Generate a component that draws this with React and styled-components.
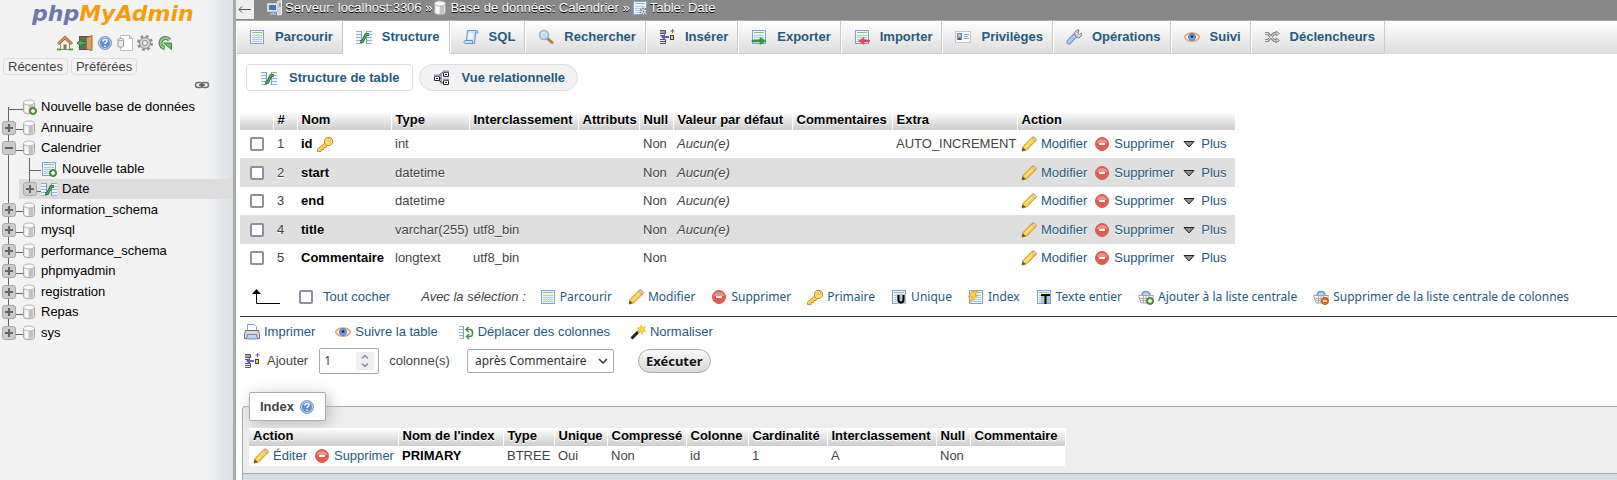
import React from "react";
import styled, { createGlobalStyle, css } from "styled-components";

const LINK = "#235a81";
const UI_FONT = `"Noto Sans", "Open Sans", sans-serif`;
const HEAD_GRADIENT = "linear-gradient(#ffffff, #cccccc)";

const GlobalStyle = createGlobalStyle`
  *, *::before, *::after { box-sizing: border-box; }
  body {
    margin: 0;
    background: #fff;
    color: #444;
    font: 13px/18px "Liberation Sans", Arial, sans-serif;
    overflow: hidden;
  }
  a { color: ${LINK}; text-decoration: none; }
  button, input, select { font: inherit; margin: 0; }
`;

/* ---------- icons ---------- */

const grid = (
  <>
    <rect x="1.5" y="1.5" width="13" height="13" fill="#f2f7fd" stroke="#7ba3d6" />
    <path d="M3 3.5h10" stroke="#8fc46f" />
    <path d="M3 6.500h10M3 8.500h10M3 10.500h10M3 12.500h10" stroke="#a9c6ea" />
    <path d="M5.500 5v8M9.500 5v8" stroke="#c9dcf2" />
  </>
);

const cylinder = (
  <>
    <path d="M2.500 3.500v9c0 1.400 2.400 2.200 5.500 2.200s5.500-.8 5.500-2.200v-9z" fill="#e2e2e2" stroke="#a6a6a6" />
    <path d="M8 6h4v7l-4 1z" fill="#c2c2c2" />
    <path d="M4 6h3v8l-3-1z" fill="#f7f7f7" />
    <ellipse cx="8" cy="3.500" rx="5.500" ry="2.500" fill="#fafafa" stroke="#b6b6b6" />
  </>
);

const plusBadge = (
  <>
    <circle cx="12" cy="12" r="3.500" fill="#5da03c" stroke="#3f7f26" />
    <path d="M12 10v4M10 12h4" stroke="#fff" strokeWidth="1.500" />
  </>
);

const basket = (
  <>
    <path d="M4 7c0-6 8-6 8 0" fill="#b9d4ee" stroke="#6d9cc4" strokeWidth="1.500" />
    <path d="M.5 6.500h15l-2 7.500H3z" fill="#f6f6f6" stroke="#a4a4a4" />
    <path d="M2 9.500h12M3 11.500h10M5.500 7v7M8 7v7M10.500 7v7" stroke="#b0b0b0" />
  </>
);

const ICONS = {
  home: (
    <>
      <path d="M3.500 8v6.500h9V8L8 4z" fill="#f6f1e4" stroke="#8e8a7c" />
      <path d="M1 9L8 2.500 15 9" fill="none" stroke="#a8642a" strokeWidth="3" />
      <path d="M1 9L8 2.500 15 9" fill="none" stroke="#dd9c55" strokeWidth="1.500" />
      <rect x="6.500" y="9.500" width="3" height="5" fill="#8b7355" />
      <path d="M0 14.500h4M12 14.500h4" stroke="#57a63b" strokeWidth="2" />
    </>
  ),
  exit: (
    <>
      <rect x="2.500" y="1.500" width="12" height="13" fill="#6f6a60" stroke="#5c5040" />
      <path d="M9.500 3l5.500-2.500v15l-5.500-1.500z" fill="#dba263" stroke="#a56a35" />
      <path d="M0 8l4.500-4v2.500H9v3H4.500V12z" fill="#4fae5b" stroke="#2c7c3a" />
    </>
  ),
  help: (
    <>
      <circle cx="8" cy="8" r="6.500" fill="#5b8fd0" stroke="#7d9cc9" />
      <circle cx="8" cy="8" r="5.500" fill="none" stroke="#c4daf3" />
      <path d="M6 6.500c0-3 4-2.500 4-.5 0 1.500-2 1.500-2 3M8 10.500v1.500" fill="none" stroke="#fff" strokeWidth="1.500" />
    </>
  ),
  docs: (
    <>
      <path d="M3.500.5h9l3 3v12h-12z" fill="#fff" stroke="#bdbdbd" />
      <path d="M12.500.5v3h3" fill="none" stroke="#b5b5b5" />
      <path d="M1 4.500v7c1 1 4.500 1 5.500 0v-7z" fill="#ececec" stroke="#9a9a9a" />
      <ellipse cx="3.750" cy="4.500" rx="2.750" ry="1" fill="#fff" stroke="#9a9a9a" />
    </>
  ),
  gear: (
    <>
      <circle cx="8" cy="8" r="6.500" fill="none" stroke="#8f8f8f" strokeWidth="3" strokeDasharray="2.600 2.500" />
      <circle cx="8" cy="8" r="5.500" fill="#d2d2d2" stroke="#8f8f8f" />
      <circle cx="8" cy="8" r="2.500" fill="#f3f3f3" stroke="#8f8f8f" />
    </>
  ),
  reload: (
    <>
      <path d="M12.500 5A5 5 0 1 0 8 13" fill="none" stroke="#3c8a44" strokeWidth="4" />
      <path d="M12.500 5A5 5 0 1 0 8 13" fill="none" stroke="#8fcb8b" strokeWidth="2" />
      <path d="M6.500 8h8v6.500z" fill="#6fba70" stroke="#3c8a44" />
    </>
  ),
  link: (
    <>
      <rect x="1.500" y="5.500" width="7" height="5" rx="2.500" fill="none" stroke="#6f6f6f" strokeWidth="1.500" />
      <rect x="7.500" y="5.500" width="7" height="5" rx="2.500" fill="none" stroke="#6f6f6f" strokeWidth="1.500" />
      <path d="M5 8h6" stroke="#4c4c4c" strokeWidth="1.500" />
    </>
  ),
  db: cylinder,
  dbNew: <>{cylinder}{plusBadge}</>,
  table: grid,
  tableNew: <>{grid}{plusBadge}</>,
  tableGear: (
    <>
      {grid}
      <circle cx="11.500" cy="11.500" r="3" fill="#e9e9e9" stroke="#858585" strokeWidth="2" strokeDasharray="1.500 1" />
      <circle cx="11.500" cy="11.500" r="1" fill="#858585" />
    </>
  ),
  structure: (
    <>
      <rect x="0" y="2" width="5" height="13" fill="#eef5fd" />
      <rect x="11" y="2" width="5" height="13" fill="#eef5fd" />
      <path d="M5.500 2v13M10.500 2v13" stroke="#6e9fdb" />
      <path d="M0 2.500h5M11 2.500h5" stroke="#8fc46f" />
      <path d="M0 5.500h5M0 8.500h5M0 11.500h5M0 14.500h5M11 5.500h5M11 8.500h5M11 11.500h5M11 14.500h5" stroke="#8fb5e4" />
      <path d="M4 12.500h2.500L10 5.500h3" fill="none" stroke="#2f7a33" strokeWidth="3" strokeLinejoin="round" />
      <path d="M4 12.500h2.500L10 5.500h3" fill="none" stroke="#5cb85c" />
    </>
  ),
  server: (
    <>
      <path d="M10.500 1.500l4-1v14l-4 .5z" fill="#d2d2d2" stroke="#efefef" />
      <path d="M12 4h2M12 6h2" stroke="#7c7c7c" />
      <rect x=".5" y="3.500" width="10" height="8" fill="#e6e6e6" stroke="#cfcfcf" />
      <rect x="2" y="5" width="7" height="5" fill="#3e76bd" />
      <path d="M3 14h6M6 11v3" stroke="#9db8d8" strokeWidth="2" />
    </>
  ),
  sql: (
    <>
      <path d="M4.500 1.500h9c2 0 2 3 0 3h-1l-1 10h-9c-2 0-2-3 0-3h1z" fill="#cfe3f9" stroke="#5f93d0" />
      <path d="M12.500 4.500v-2M2.500 11.500h7v3" fill="none" stroke="#5f93d0" />
      <path d="M5.500 4h5L9.500 10H5z" fill="#eef6ff" />
    </>
  ),
  search: (
    <>
      <path d="M9.500 9.500l4.500 4" stroke="#b27c45" strokeWidth="3" strokeLinecap="round" />
      <circle cx="6" cy="6" r="4.500" fill="#c3dffa" stroke="#93b3d8" strokeWidth="1.500" />
      <path d="M4 5c.5-1 1.500-1.500 2.500-1.500" fill="none" stroke="#fff" />
    </>
  ),
  insert: (
    <>
      <path d="M1 1.500h5.500v3H1M1 10.500h5.500v4H1M1 12.500h5M1 3h5M1 6.500h3" fill="none" stroke="#555" />
      <path d="M2 8l4-3.500V7h4v2H6v2.500z" fill="#5d5dcc" />
      <rect x="11.500" y="6.500" width="3" height="4" fill="#ffcf2e" stroke="#444" />
      <path d="M13.500 0v4M11.500 2h4" stroke="#5d5dcc" />
    </>
  ),
  export: (
    <>
      {grid}
      <path d="M1 11h8V8.500l6 3.500-6 3.500V13H1z" fill="#3f9a3c" stroke="#2c7a2b" strokeWidth=".5" />
    </>
  ),
  import: (
    <>
      {grid}
      <path d="M15.500 11H10V8.500L4.500 12l5.500 3.500V13h5.500z" fill="#ee4b54" stroke="#d6303a" strokeWidth=".5" />
    </>
  ),
  privileges: (
    <>
      <rect x=".5" y="2.500" width="15" height="11" fill="#fdfdfd" stroke="#c5c5c5" />
      <rect x="2" y="4" width="5" height="7" fill="#4d94dc" />
      <circle cx="4.500" cy="6.500" r="1.500" fill="#f0c79a" />
      <path d="M3 11c0-3 3-3 3 0z" fill="#8a4f2d" />
      <path d="M9 5.500h5M9 7.500h4M9 9.500h5" stroke="#79a7db" />
    </>
  ),
  wrench: (
    <>
      <path d="M8.500 8L8 4.500l3-3.500 2 0-1 3 1.500 1.500 2-1.500.5 2-3 3z" fill="#d5d5d5" stroke="#808080" />
      <path d="M3 13L8 7.500" stroke="#6f8fd0" strokeWidth="5" strokeLinecap="round" />
      <path d="M3 13L8 7.500" stroke="#b4c8f2" strokeWidth="3" strokeLinecap="round" />
    </>
  ),
  eye: (
    <>
      <path d="M.5 8C3 2.500 13 2.500 15.500 8 13 13.500 3 13.500.5 8z" fill="#f8efe8" stroke="#d9a57f" strokeWidth="1.500" />
      <circle cx="8" cy="8" r="3.500" fill="#7ba4e6" stroke="#5478bb" />
      <circle cx="8" cy="7.500" r="1.500" fill="#1e2b52" />
    </>
  ),
  shuffle: (
    <>
      <path d="M1 4.500h3l6 7h3M1 11.500h3l6-7h3" fill="none" stroke="#8b8b8b" strokeWidth="3" />
      <path d="M1 4.500h3l6 7h3M1 11.500h3l6-7h3" fill="none" stroke="#e4e4e4" />
      <path d="M12 2l3.500 2.500L12 7zM12 9l3.500 2.500L12 14z" fill="#ddd" stroke="#8b8b8b" />
    </>
  ),
  relation: (
    <>
      <path d="M4 6l5-4M4 10l5 3M5 8.500h2v5M7 4v5" stroke="#555" fill="none" />
      <path d="M9.500 2.500h5v4h-5zM9.500 10.500h5v4h-5zM.5 6.500h5v4h-5z" fill="#fff" stroke="#222" />
      <path d="M9 1.500h6M9 9.500h6M0 5.500h6" stroke="#9a93dd" strokeWidth="2" />
      <path d="M11 4.500h2M11 12.500h2M2 8.500h2" stroke="#222" />
    </>
  ),
  key: (
    <>
      <path d="M8 7L.5 13v2.500h3.500l.5-2h2l.5-2h2l1-1.500" fill="#f9d455" stroke="#c98f24" />
      <path d="M9.500 1.500h4l2 2v3.500l-2.500 2.500h-3.500l-2-2.500V4z" fill="#fbdc6a" stroke="#c98f24" />
      <circle cx="12.300" cy="4" r="1.300" fill="#fff" stroke="#c98f24" strokeWidth=".7" />
    </>
  ),
  pencil: (
    <>
      <path d="M1 15l1-4.500L11 1.500c1.500-1.500 5 1.500 3.500 3.500L5.500 14z" fill="#f8d24e" stroke="#c18a2b" />
      <path d="M10.500 2l4 3.500 .8-2.500-2.300-2z" fill="#f6cdb0" stroke="#c98b5d" strokeWidth=".7" />
      <path d="M4 11.500L12 3.500" stroke="#fff0a4" />
      <path d="M1 15l.8-3.500L4.500 14z" fill="#5d4527" />
    </>
  ),
  drop: (
    <>
      <circle cx="8" cy="8" r="6.500" fill="#e85a4f" stroke="#d2605a" />
      <path d="M3 7c.5-5.500 9.500-5.500 10 0z" fill="#f39186" />
      <rect x="5" y="7" width="6" height="2" fill="#fff" />
    </>
  ),
  more: <path d="M3 5.500h10L8 11z" fill="#909090" stroke="#222" />,
  unique: (
    <>
      {grid}
      <rect x="6" y="5" width="9" height="10" fill="#b4c2d4" />
      <path d="M7.500 6v4.500c0 4 5 4 5 0V6" fill="none" stroke="#000" strokeWidth="2" />
    </>
  ),
  index: (
    <>
      {grid}
      <path d="M4 2h6L7 6h3l-9 8 3-6H0z" fill="#fccb45" stroke="#dd9b27" strokeWidth=".7" />
    </>
  ),
  fulltext: (
    <>
      {grid}
      <rect x="5" y="5" width="9" height="9" fill="#b4c2d4" />
      <path d="M5 6h9M9.500 6v9" stroke="#000" strokeWidth="2" />
    </>
  ),
  basketAdd: <>{basket}{plusBadge}</>,
  basketRemove: (
    <>
      {basket}
      <circle cx="12" cy="12" r="3.500" fill="#ee6a1d" stroke="#c14d0c" />
      <path d="M10 12h4" stroke="#fff" strokeWidth="1.500" />
    </>
  ),
  print: (
    <>
      <path d="M3.500 7V.5h7l2 2V7z" fill="#fff" stroke="#85a5cc" />
      <path d="M1.500 6.500h13l1 4v4H.5v-4z" fill="#d8d8d8" stroke="#707070" />
      <path d="M3.500 10.500h9l1 4.500h-11z" fill="#b8d4f2" stroke="#6d8db5" />
    </>
  ),
  moveCols: (
    <>
      <path d="M1 2.500h5" stroke="#8fc46f" />
      <path d="M5.500 2v13" stroke="#6e9fdb" />
      <path d="M1 5.500h5M1 8.500h5M1 11.500h5M1 14.500h5" stroke="#8db3e0" />
      <path d="M8 5.500h4c3.500 0 3.500 7 0 7H9" fill="none" stroke="#46934a" strokeWidth="1.500" />
      <path d="M10.500 3L8 5.500 10.500 8M11 10l-2.500 2.500L11 15" fill="none" stroke="#46934a" strokeWidth="1.500" />
    </>
  ),
  wand: (
    <>
      <path d="M1.500 14.500L9 7" stroke="#222" strokeWidth="3" />
      <path d="M8 8l2-2" stroke="#ccc" strokeWidth="3" />
      <path d="M11.500.5l1 3 3-1-1.500 2.500 2 2.500-3 0-.5 3-2-2.500-2.500 1 1-3-2-2 3-.5z" fill="#fbd33c" stroke="#e4a72a" strokeWidth=".5" />
    </>
  ),
};

const IconSvg = styled.svg`
  flex: none;
  display: block;
`;

const Icon = ({ name }) => {
  const narrow = name === "db" || name === "dbNew";
  return (
    <IconSvg
      width={narrow ? 14 : 16}
      height="16"
      viewBox={narrow ? "2 0 14 16" : "0 0 16 16"}
      aria-hidden="true"
    >
      {ICONS[name]}
    </IconSvg>
  );
};

/* ---------- shell ---------- */

const Page = styled.div`
  display: flex;
  height: 100vh;
`;

const Sidebar = styled.aside`
  flex: none;
  width: 236px;
  border-right: 3px solid #aaa;
  background: linear-gradient(to right, #f3f3f3 88%, #dce1e6);
  overflow: hidden;
`;

const Main = styled.main`
  flex: 1;
  min-width: 0;
  overflow: hidden;
`;

/* ---------- sidebar ---------- */

const Logo = styled.a`
  display: block;
  padding-left: 32px;
  height: 33px;
  font: italic bold 22px/28px "DejaVu Sans", sans-serif;
  color: #f89c0e;
  span { color: #6c78af; }
`;

const QuickLinks = styled.nav`
  display: flex;
  gap: 4px;
  padding: 2px 0 0 57px;
`;

const Shortcuts = styled.div`
  display: flex;
  gap: 3px;
  padding: 7px 3px 0;
`;

const ShortcutButton = styled.button`
  height: 17px;
  padding: 0 4px;
  border: 1px solid #ddd;
  border-radius: 4px;
  background: #f3f3f3;
  color: #444;
  line-height: 14px;
`;

const LinkToggle = styled.button`
  display: block;
  margin: 2px 23px 0 auto;
  padding: 0;
  border: 0;
  background: none;
`;

const Tree = styled.ul`
  list-style: none;
  margin: 0;
  padding: 4px 0 0;
`;

const TreeRow = styled.li`
  display: flex;
  align-items: center;
  height: 20px;
  padding-left: 2px;
  &:nth-child(even) { height: 21px; }
  a { color: #000; margin-left: 4px; }
`;

const TrunkCell = styled.span`
  flex: none;
  display: flex;
  align-items: center;
  align-self: stretch;
  width: 21px;
  background:
    linear-gradient(#666, #666) 6px ${(p) => (p.$start ? "10px" : "0")} / 1px ${(p) => (p.$end ? "50%" : "100%")} no-repeat
    ${(p) => p.$branch && `, linear-gradient(#666, #666) 6px 12px / 15px 1px no-repeat`};
`;

const ChildArea = styled.span`
  display: flex;
  align-items: center;
  align-self: stretch;
  flex: 1;
  margin-left: -4px;
  background: ${(p) => (p.$active ? "#ddd" : "none")};
  a { margin-left: 5px; }
`;

const ChildTrunk = styled(TrunkCell)`
  width: 22px;
  padding-left: 4px;
  background:
    linear-gradient(#666, #666) 10px 0 / 1px ${(p) => (p.$end ? "50%" : "100%")} no-repeat,
    linear-gradient(#666, #666) 10px 12px / 12px 1px no-repeat;
`;

const Expander = styled.button`
  display: block;
  width: 14px;
  height: 14px;
  padding: 0;
  border: 1px solid #aaa;
  border-radius: 3px;
  background: #ccc;
  svg { display: block; }
`;

const Toggle = ({ open, label }) => (
  <Expander aria-label={label} aria-expanded={!!open}>
    <svg width="12" height="12" viewBox="0 0 12 12">
      <path d={open ? "M2 6h8" : "M2 6h8M6 2v8"} stroke="#666" strokeWidth="2" />
    </svg>
  </Expander>
);

const DbRow = ({ name, open, end }) => (
  <TreeRow>
    <TrunkCell $branch $end={end}><Toggle open={open} label={name} /></TrunkCell>
    <Icon name="db" />
    <a href="#db">{name}</a>
  </TreeRow>
);

/* ---------- breadcrumb and tabs ---------- */

const Breadcrumb = styled.nav`
  display: flex;
  align-items: flex-start;
  height: 20px;
  background: #888;
  color: #fff;
  text-shadow: 0 1px 0 #000;
  a { color: inherit; line-height: 16px; }
`;

const BackButton = styled.button`
  width: 18px;
  height: 19px;
  margin-right: 13px;
  padding: 0;
  border: 0;
  background: #eee;
  svg { display: block; }
`;

const Crumb = styled.span`
  display: flex;
  gap: 2px;
  line-height: 16px;
`;

const Tabs = styled.nav`
  display: flex;
  height: 34px;
  border-top: 1px solid #aaa;
  background: linear-gradient(#ffffff, #dcdcdc);
`;

const Tab = styled.a`
  display: flex;
  align-items: center;
  gap: 10px;
  padding: 0 9px 0 12px;
  border-left: 1px solid #fff;
  border-right: 1px solid #ccc;
  border-bottom: 1px solid #ccc;
  font-weight: bold;
  ${(p) => p.$active && css`
    background: #fff;
    border-left-color: #fff;
    border-bottom-color: #fff;
  `}
`;

const SubTabs = styled.nav`
  display: flex;
  gap: 6px;
  padding: 10px 10px 0;
`;

const SubTab = styled.a`
  display: flex;
  align-items: center;
  gap: 12px;
  height: 27px;
  padding: 0 12px 0 14px;
  border: 1px solid #ddd;
  border-radius: ${(p) => (p.$active ? "4px" : "14px")};
  background: ${(p) => (p.$active ? "#fff" : "#f2f2f2")};
  font-weight: bold;
`;

/* ---------- tables ---------- */

const Table = styled.table`
  table-layout: fixed;
  width: ${(p) => p.$width}px;
  border-collapse: collapse;
  white-space: nowrap;
  th, td { padding: 0 4px; text-align: left; }
  thead th {
    height: 18px;
    border-right: 1px solid #fff;
    background: ${HEAD_GRADIENT};
    color: #000;
    line-height: 16px;
    vertical-align: top;
    text-shadow: 0 1px 0 #fff;
  }
  tbody th { color: #000; }
`;

const ColumnsTable = styled(Table)`
  margin: 21px 0 0 4px;
  tbody tr { height: 28px; }
  tbody tr:nth-child(even) { height: 29px; background: #dfdfdf; text-shadow: 0 1px 0 #fff; }
`;

const IndexTable = styled(Table)`
  tbody tr { height: 20px; background: #fff; }
`;

const NameCell = styled.span`
  display: flex;
  align-items: center;
  gap: 4px;
`;

const Checkbox = styled.input.attrs({ type: "checkbox" })`
  appearance: none;
  display: block;
  width: 14px;
  height: 14px;
  margin-left: ${(p) => (p.$inCell ? "6px" : "0")};
  border: 2px solid #8f8f9d;
  border-radius: 2px;
  background: #fff;
`;

const Actions = styled.span`
  display: flex;
  gap: 7px;
`;

const IconLink = styled.a`
  display: flex;
  align-items: center;
  gap: 4px;
`;

/* ---------- forms under the table ---------- */

const SelectionBar = styled.div`
  display: flex;
  align-items: center;
  height: 45px;
  margin-left: 4px;
  padding: 6px 0 0 12px;
  border-bottom: 1px solid #333;
  white-space: nowrap;
`;

const CheckAll = styled.label`
  display: flex;
  align-items: center;
  gap: 10px;
  margin: 0 31px 0 19px;
  color: ${LINK};
`;

const BulkActions = styled.div`
  display: flex;
  gap: 16px;
  margin-left: 14px;
`;

const BulkButton = styled.button`
  display: flex;
  align-items: center;
  gap: 4px;
  padding: 0;
  border: 0;
  background: none;
  color: ${LINK};
  font: 12px/18px ${UI_FONT};
`;

const TableTools = styled.nav`
  display: flex;
  gap: 20px;
  padding: 6px 0 0 8px;
`;

const AddForm = styled.form`
  display: flex;
  align-items: center;
  padding: 5px 0 0 8px;
  height: 34px;
  label { margin: 0 11px 0 7px; }
`;

const NumberWrap = styled.span`
  display: flex;
  align-items: center;
  width: 60px;
  height: 26px;
  margin-right: 10px;
  padding: 0 4px;
  border: 1px solid #aaa;
  border-radius: 2px;
  background: #fff;
  input {
    flex: 1;
    min-width: 0;
    padding: 0;
    border: 0;
    outline: 0;
    color: #444;
    font: 12px/18px ${UI_FONT};
    appearance: textfield;
  }
  input::-webkit-inner-spin-button { display: none; }
`;

const SelectWrap = styled.span`
  display: flex;
  align-items: center;
  height: 24px;
  margin: 0 24px 0 17px;
  border: 1px solid #aaa;
  border-radius: 2px;
  background: #fff;
  select {
    appearance: none;
    height: 22px;
    width: 145px;
    padding: 0 0 0 7px;
    border: 0;
    background: transparent;
    color: #333;
    font: 12px/20px ${UI_FONT};
  }
  svg { margin-left: -15px; margin-right: 5px; pointer-events: none; }
`;

const SubmitButton = styled.button`
  height: 24px;
  padding: 0 7px;
  border: 1px solid #aaa;
  border-radius: 12px;
  background: linear-gradient(#f8f8f8, #d8d8d8);
  color: #111;
  font: bold 13px/20px ${UI_FONT};
  text-shadow: 0 1px 0 #fff;
`;

/* ---------- index panel ---------- */

const IndexPanel = styled.fieldset`
  margin: 17px 0 0 6px;
  padding: 7px 0 0 6px;
  min-width: 0;
  border: 1px solid #aaa;
  border-right: 0;
  border-bottom: 0;
  border-radius: 4px 0 0 0;
  background: #eee;
`;

const IndexLegend = styled.legend`
  display: flex;
  align-items: center;
  gap: 5px;
  height: 29px;
  padding: 0 10px;
  border: 1px solid #aaa;
  border-radius: 2px;
  background: #fff;
  box-shadow: 3px 3px 15px #bbb;
  font-weight: bold;
`;

const PanelFooter = styled.div`
  height: 20px;
  margin: 7px 0 0 -6px;
  border-top: 1px solid #aaa;
  background: linear-gradient(#d3dce3, #e6ebef);
`;

const COLUMNS = [
  { name: "id", type: "int", collation: "", def: "Aucun(e)", extra: "AUTO_INCREMENT", key: true },
  { name: "start", type: "datetime", collation: "", def: "Aucun(e)" },
  { name: "end", type: "datetime", collation: "", def: "Aucun(e)" },
  { name: "title", type: "varchar(255)", collation: "utf8_bin", def: "Aucun(e)" },
  { name: "Commentaire", type: "longtext", collation: "utf8_bin", def: "" },
];

const COLUMN_HEADS = [
  ["", 33], ["#", 24], ["Nom", 94], ["Type", 78], ["Interclassement", 109], ["Attributs", 61],
  ["Null", 34], ["Valeur par défaut", 119], ["Commentaires", 100], ["Extra", 125], ["Action", 218],
];

const INDEX_HEADS = [
  ["Action", 149], ["Nom de l'index", 105], ["Type", 51], ["Unique", 53], ["Compressé", 79],
  ["Colonne", 62], ["Cardinalité", 79], ["Interclassement", 109], ["Null", 34], ["Commentaire", 95],
];

const TABS = [
  ["table", "Parcourir"], ["structure", "Structure"], ["sql", "SQL"], ["search", "Rechercher"],
  ["insert", "Insérer"], ["export", "Exporter"], ["import", "Importer"], ["privileges", "Privilèges"],
  ["wrench", "Opérations"], ["eye", "Suivi"], ["shuffle", "Déclencheurs"],
];

const BULK = [
  ["table", "Parcourir"], ["pencil", "Modifier"], ["drop", "Supprimer"], ["key", "Primaire"],
  ["unique", "Unique"], ["index", "Index"], ["fulltext", "Texte entier"],
  ["basketAdd", "Ajouter à la liste centrale"],
  ["basketRemove", "Supprimer de la liste centrale de colonnes"],
];

const TOOLS = [
  ["print", "Imprimer"], ["eye", "Suivre la table"], ["moveCols", "Déplacer des colonnes"], ["wand", "Normaliser"],
];

const QUICK = [
  ["home", "Accueil"], ["exit", "Déconnexion"], ["help", "Documentation"],
  ["docs", "Documentation MySQL"], ["gear", "Paramètres"], ["reload", "Actualiser"],
];

const Heads = ({ heads }) => (
  <>
    <colgroup>{heads.map(([label, w]) => <col key={label} width={w} />)}</colgroup>
    <thead><tr>{heads.map(([label]) => <th key={label} scope="col">{label}</th>)}</tr></thead>
  </>
);

const total = (heads) => heads.reduce((sum, [, w]) => sum + w, 0);

export default function App() {
  return (
    <Page>
      <GlobalStyle />
      <Sidebar>
        <Logo href="#home"><span>php</span>MyAdmin</Logo>
        <QuickLinks>
          {QUICK.map(([icon, label]) => (
            <a key={icon} href={`#${icon}`} aria-label={label}><Icon name={icon} /></a>
          ))}
        </QuickLinks>
        <Shortcuts>
          <ShortcutButton>Récentes</ShortcutButton>
          <ShortcutButton>Préférées</ShortcutButton>
        </Shortcuts>
        <LinkToggle aria-label="Lier au panneau principal"><Icon name="link" /></LinkToggle>
        <Tree>
          <TreeRow>
            <TrunkCell $branch $start />
            <Icon name="dbNew" />
            <a href="#new">Nouvelle base de données</a>
          </TreeRow>
          <DbRow name="Annuaire" />
          <DbRow name="Calendrier" open />
          <TreeRow>
            <TrunkCell />
            <ChildArea>
              <ChildTrunk />
              <Icon name="tableNew" />
              <a href="#newtable">Nouvelle table</a>
            </ChildArea>
          </TreeRow>
          <TreeRow>
            <TrunkCell />
            <ChildArea $active>
              <ChildTrunk $end><Toggle label="Date" /></ChildTrunk>
              <Icon name="structure" />
              <a href="#date">Date</a>
            </ChildArea>
          </TreeRow>
          <DbRow name="information_schema" />
          <DbRow name="mysql" />
          <DbRow name="performance_schema" />
          <DbRow name="phpmyadmin" />
          <DbRow name="registration" />
          <DbRow name="Repas" />
          <DbRow name="sys" end />
        </Tree>
      </Sidebar>

      <Main>
        <Breadcrumb>
          <BackButton aria-label="Masquer le panneau">
            <svg width="18" height="19" viewBox="0 0 18 19">
              <path d="M3 9.500h12M6 6.500l-3 3 3 3" fill="none" stroke="#555" />
            </svg>
          </BackButton>
          <Crumb><Icon name="server" /><a href="#server">Serveur: localhost:3306</a></Crumb>
          <Crumb>&nbsp;»<Icon name="db" /><a href="#db">Base de données: Calendrier</a></Crumb>
          <Crumb>&nbsp;»<Icon name="tableGear" /><a href="#table">Table: Date</a></Crumb>
        </Breadcrumb>
        <Tabs>
          {TABS.map(([icon, label]) => (
            <Tab key={label} href={`#${icon}`} $active={label === "Structure"}>
              <Icon name={icon} />{label}
            </Tab>
          ))}
        </Tabs>
        <SubTabs>
          <SubTab href="#structure" $active><Icon name="structure" />Structure de table</SubTab>
          <SubTab href="#relation"><Icon name="relation" />Vue relationnelle</SubTab>
        </SubTabs>

        <ColumnsTable $width={total(COLUMN_HEADS)}>
          <Heads heads={COLUMN_HEADS} />
          <tbody>
            {COLUMNS.map((c, i) => (
              <tr key={c.name}>
                <td><Checkbox $inCell aria-label={c.name} /></td>
                <td>{i + 1}</td>
                <th scope="row"><NameCell>{c.name}{c.key && <Icon name="key" />}</NameCell></th>
                <td>{c.type}</td>
                <td>{c.collation}</td>
                <td />
                <td>Non</td>
                <td><i>{c.def}</i></td>
                <td />
                <td>{c.extra}</td>
                <td>
                  <Actions>
                    <IconLink href="#edit"><Icon name="pencil" />Modifier</IconLink>
                    <IconLink href="#drop"><Icon name="drop" />Supprimer</IconLink>
                    <IconLink href="#more"><Icon name="more" />Plus</IconLink>
                  </Actions>
                </td>
              </tr>
            ))}
          </tbody>
        </ColumnsTable>

        <SelectionBar>
          <svg width="28" height="16" viewBox="0 0 28 16" aria-hidden="true">
            <path d="M4.500 2v12.500H28" fill="none" stroke="#000" />
            <path d="M0 5L4.500 0 9 5z" />
          </svg>
          <CheckAll><Checkbox />Tout cocher</CheckAll>
          <i>Avec la sélection :</i>
          <BulkActions>
            {BULK.map(([icon, label]) => (
              <BulkButton key={label}><Icon name={icon} />{label}</BulkButton>
            ))}
          </BulkActions>
        </SelectionBar>

        <TableTools>
          {TOOLS.map(([icon, label]) => (
            <IconLink key={label} href={`#${icon}`}><Icon name={icon} />{label}</IconLink>
          ))}
        </TableTools>

        <AddForm>
          <Icon name="insert" />
          <label htmlFor="count">Ajouter</label>
          <NumberWrap>
            <input id="count" type="number" defaultValue="1" />
            <svg width="18" height="18" viewBox="0 0 18 18" aria-hidden="true">
              <rect width="18" height="18" fill="#efeff2" />
              <path d="M6 6.500l3-3 3 3M6 11.500l3 3 3-3" fill="none" stroke="#8f8f9d" strokeWidth="1.500" />
            </svg>
          </NumberWrap>
          <span>colonne(s)</span>
          <SelectWrap>
            <select aria-label="Position"><option>après Commentaire</option></select>
            <svg width="10" height="10" viewBox="0 0 10 10" aria-hidden="true">
              <path d="M1 3l4 4 4-4" fill="none" stroke="#333" strokeWidth="1.500" />
            </svg>
          </SelectWrap>
          <SubmitButton type="button">Exécuter</SubmitButton>
        </AddForm>

        <IndexPanel>
          <IndexLegend>Index<Icon name="help" /></IndexLegend>
          <IndexTable $width={total(INDEX_HEADS)}>
            <Heads heads={INDEX_HEADS} />
            <tbody>
              <tr>
                <td>
                  <Actions>
                    <IconLink href="#edit"><Icon name="pencil" />Éditer</IconLink>
                    <IconLink href="#drop"><Icon name="drop" />Supprimer</IconLink>
                  </Actions>
                </td>
                <th scope="row">PRIMARY</th>
                <td>BTREE</td>
                <td>Oui</td>
                <td>Non</td>
                <td>id</td>
                <td>1</td>
                <td>A</td>
                <td>Non</td>
                <td />
              </tr>
            </tbody>
          </IndexTable>
          <PanelFooter />
        </IndexPanel>
      </Main>
    </Page>
  );
}
